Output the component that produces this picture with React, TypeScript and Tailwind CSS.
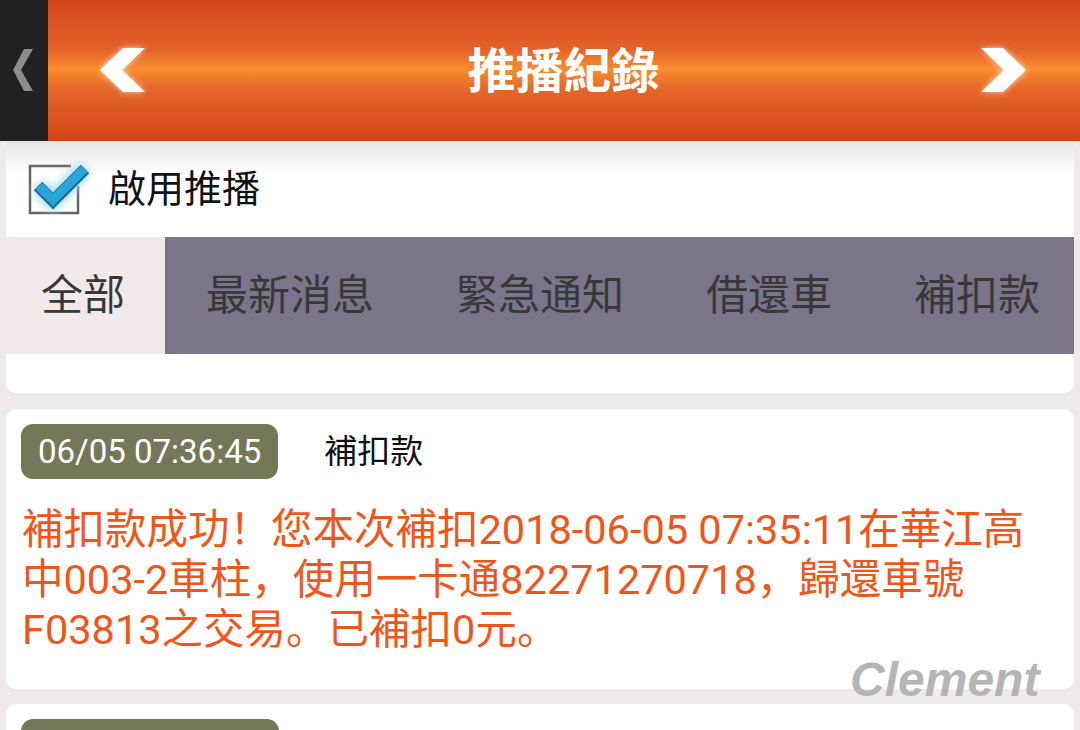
import React from "react";

const cjk = "font-['Roboto','Noto_Sans_CJK_SC',sans-serif]";

function LeftArrow() {
  return (
    <svg width="50" height="50" viewBox="-2 -2 50 50" className="drop-shadow-[0_0_3px_rgba(255,255,255,0.7)]">
      <polygon points="0,22 23,0 45,0 22,22 45,44 23,44" fill="#ffffff" />
    </svg>
  );
}

function RightArrow() {
  return (
    <svg width="50" height="50" viewBox="-2 -2 50 50" className="drop-shadow-[0_0_3px_rgba(255,255,255,0.7)]">
      <polygon points="45,22 22,0 0,0 23,22 0,44 22,44" fill="#ffffff" />
    </svg>
  );
}

function CheckIcon() {
  return (
    <svg width="64" height="60" viewBox="0 0 64 60">
      <defs>
        <filter id="glow" x="-50%" y="-50%" width="200%" height="200%">
          <feGaussianBlur stdDeviation="5" />
        </filter>
      </defs>
      <path d="M43,7 H2 V54 H50 V27" fill="none" stroke="#666666" strokeWidth="2.5" />
      <polyline points="10,27 25,42 57,9" fill="none" stroke="#9fdcf5" strokeWidth="16" filter="url(#glow)" />
      <polyline points="10,27 25,42 57,10" fill="none" stroke="#17739c" strokeWidth="12" strokeLinejoin="miter" />
      <polyline points="11,27 25,41 56,10" fill="none" stroke="#2aa5da" strokeWidth="9" strokeLinejoin="miter" />
    </svg>
  );
}

export default function App() {
  return (
    <div className={`relative w-[1080px] h-[730px] overflow-hidden bg-[#f0eaeb] ${cjk}`}>
      {/* Header */}
      <div className="flex h-[141px]">
        <div className="w-[48px] bg-[#212121] flex items-center">
          <svg width="48" height="140" viewBox="0 0 48 140">
            <polygon points="13,69 24,48 33,48 21,69 33,90 24,90" fill="#8c8c8c" />
          </svg>
        </div>
        <div className="flex-1 flex items-center justify-between pl-[50px] pr-[51px] bg-[linear-gradient(to_bottom,#d3461a_0%,#e3622a_35%,#fb8d2e_49%,#e5672a_63%,#d14417_100%)]">
          <LeftArrow />
          <div className="mb-[8px] text-white text-[48px] font-bold leading-none font-['Noto_Sans_CJK_TC',sans-serif]">推播紀錄</div>
          <RightArrow />
        </div>
      </div>

      <div className="px-[6px]">
        {/* Checkbox row */}
        <div className="h-[96px] bg-[linear-gradient(to_bottom,#e6e6e6_0%,#ffffff_35%,#ffffff_100%)] flex items-center pl-[22px]">
          <CheckIcon />
          <span className="ml-[16px] text-[38px] text-[#111111] leading-none">啟用推播</span>
        </div>

        {/* Tabs */}
        <div className="flex h-[117px] -ml-[6px] text-[42px] leading-none text-[#383838] whitespace-nowrap">
          <div className="w-[165px] shrink-0 bg-[#f2eaea] flex items-center pl-[41px]">全部</div>
          <div className="flex-1 bg-[#7a7589] flex items-center overflow-hidden">
            <div className="shrink-0 px-[41px]">最新消息</div>
            <div className="shrink-0 px-[41px]">緊急通知</div>
            <div className="shrink-0 px-[41px]">借還車</div>
            <div className="shrink-0 px-[41px]">補扣款</div>
          </div>
        </div>

        {/* previous card remnant */}
        <div className="h-[39px] bg-white rounded-b-[10px]" />

        {/* card */}
        <div className="mt-[16px] h-[280px] bg-white rounded-[10px] pt-[15px] px-[15px]">
          <div className="flex items-center">
            <div className="h-[55px] px-[17px] rounded-[12px] bg-[#747859] text-white text-[33px] flex items-center leading-none">
              06/05 07:36:45
            </div>
            <div className="ml-[46px] text-[33px] text-[#111111] leading-none">補扣款</div>
          </div>
          <div className="mt-[26px] pl-[1px] text-[41.5px] leading-[50px] text-[#f0561a] whitespace-nowrap">
            <div>補扣款成功！您本次補扣2018-06-05 07:35:11在華江高</div>
            <div>中003-2車柱，使用一卡通82271270718，歸還車號</div>
            <div>F03813之交易。已補扣0元。</div>
          </div>
        </div>

        {/* next card */}
        <div className="mt-[15px] h-[120px] bg-white rounded-[10px] pt-[15px] px-[15px]">
          <div className="h-[55px] w-[258px] rounded-[12px] bg-[#747859]" />
        </div>
      </div>

      {/* watermark */}
      <div className="absolute left-[850px] top-[656px] text-[48px] leading-[48px] font-bold italic text-[#b5b5b5] font-['Liberation_Sans',Arial,sans-serif]">
        Clement
      </div>
    </div>
  );
}
